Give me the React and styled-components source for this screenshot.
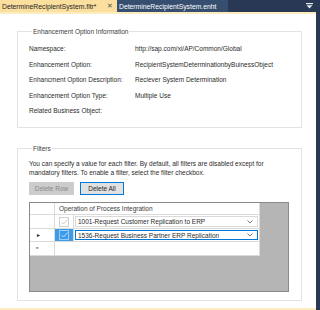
import React from "react";
import styled, { createGlobalStyle } from "styled-components";

const GlobalStyle = createGlobalStyle`
  html, body {
    margin: 0;
    padding: 0;
  }
  body {
    font-family: "Liberation Sans", Arial, sans-serif;
    color: #1e1e1e;
  }
`;

const Window = styled.div`
  width: 320px;
  height: 310px;
  background: #293955;
  display: flex;
  flex-direction: column;
  overflow: hidden;
`;

const TabBar = styled.div`
  height: 12px;
  display: flex;
  align-items: stretch;
  padding-right: 4px;
`;

const Tab = styled.div`
  display: flex;
  align-items: center;
  gap: 6px;
  padding: 0 4px 0 2px;
  font-size: 6.8px;
  white-space: nowrap;
  background: ${(p) => (p.$active ? "#fadf9e" : "#364e6f")};
  color: ${(p) => (p.$active ? "#1e1e1e" : "#ffffff")};
  width: ${(p) => p.$width}px;
  box-sizing: border-box;
`;

const Close = styled.span`
  font-size: 7px;
  color: #555;
  margin-left: auto;
`;

const Spacer = styled.div`
  flex: 1;
`;

const Overflow = styled.div`
  width: 10px;
  display: flex;
  align-items: center;
  justify-content: center;
  margin-right: 2px;
`;

const Main = styled.div`
  flex: 1;
  display: flex;
  padding-right: 4px;
`;

const Document = styled.div`
  flex: 1;
  background: #ffffff;
  border-top: 2px solid #fcecc0;
  border-bottom: 2px solid #fcecc0;
  padding: 14px 14px 0 17px;
  display: flex;
  flex-direction: column;
  gap: 17px;
`;

const Group = styled.fieldset`
  margin: 0;
  border: 1px solid #e3e3e3;
  padding: ${(p) => p.$pad};
  font-size: 6.5px;
  height: ${(p) => p.$height}px;
  box-sizing: border-box;
  legend {
    padding: 0 1px;
    margin-left: 3px;
    font-size: 6.5px;
    color: #3c3c3c;
  }
`;

const InfoGrid = styled.div`
  display: grid;
  grid-template-columns: 106px 1fr;
  grid-auto-rows: 15.5px;
  align-items: center;
  color: #2b2b2b;
`;

const Hint = styled.p`
  margin: 0;
  line-height: 9px;
  color: #2b2b2b;
`;

const Buttons = styled.div`
  display: flex;
  gap: 6px;
  margin: 5px 0 7px;
`;

const Button = styled.button`
  height: 13px;
  width: ${(p) => p.$width}px;
  padding: 0;
  font-family: inherit;
  font-size: 6.5px;
  background: ${(p) => (p.$disabled ? "#cccccc" : "#e1e1e1")};
  color: ${(p) => (p.$disabled ? "#8a8a8a" : "#1e1e1e")};
  border: 1px solid ${(p) => (p.$disabled ? "#cccccc" : "#0078d7")};
`;

const Grid = styled.div`
  width: 260px;
  height: 90px;
  box-sizing: border-box;
  background: #b5b5b5;
  border: 1px solid #8a8a8a;
  display: grid;
  grid-template-columns: 25px 19px 186px;
  grid-template-rows: 12px 14px 13px 14px;
  align-content: start;
`;

const Cell = styled.div`
  background: ${(p) => p.$bg || "#ffffff"};
  border-right: 1px solid #dadada;
  border-bottom: 1px solid #dadada;
  box-sizing: border-box;
  display: flex;
  align-items: center;
  justify-content: ${(p) => (p.$center ? "center" : "flex-start")};
  grid-column: ${(p) => p.$span || "auto"};
  font-size: 6.5px;
  color: #2b2b2b;
`;

const Header = styled(Cell)`
  color: #3c3c3c;
  padding-left: 4px;
`;

const Check = styled.div`
  width: 8px;
  height: 8px;
  border: 1px solid ${(p) => (p.$selected ? "#9fcaf2" : "#cfcfcf")};
  display: flex;
  align-items: center;
  justify-content: center;
`;

const Combo = styled.div`
  flex: 1;
  align-self: stretch;
  margin: 1px;
  display: flex;
  align-items: center;
  padding: 0 4px 0 2px;
  border: 1px solid ${(p) => (p.$focus ? "#0078d7" : "#dadada")};
  span {
    flex: 1;
  }
`;

const Marker = styled.span`
  font-size: ${(p) => p.$size}px;
  color: #1e1e1e;
  margin-left: 6px;
`;

const CheckMark = ({ color }) => (
  <svg width="7" height="6" viewBox="0 0 7 6">
    <polyline points="0.5,3 2.5,5 6.5,0.5" fill="none" stroke={color} strokeWidth="0.9" />
  </svg>
);

const Chevron = () => (
  <svg width="6" height="4" viewBox="0 0 6 4">
    <polyline points="0.5,0.5 3,3 5.5,0.5" fill="none" stroke="#555" strokeWidth="0.8" />
  </svg>
);

const info = [
  ["Namespace:", "http://sap.com/xi/AP/Common/Global"],
  ["Enhancement Option:", "RecipientSystemDeterminationbyBuinessObject"],
  ["Enhancment Option Description:", "Reciever System Determination"],
  ["Enhancement Option Type:", "Multiple Use"],
  ["Related Business Object:", ""],
];

const rows = [
  { text: "1001-Request Customer Replication to ERP", current: false },
  { text: "1536-Request Business Partner ERP Replication", current: true },
];

const App = () => (
  <Window>
    <GlobalStyle />
    <TabBar>
      <Tab $active $width={117}>
        DetermineRecipientSystem.fltr*
        <Close>✕</Close>
      </Tab>
      <Tab $width={111}>DetermineRecipientSystem.enht</Tab>
      <Spacer />
      <Overflow>
        <svg width="7" height="6" viewBox="0 0 7 6">
          <rect x="0" y="0" width="7" height="1.2" fill="#e6e9ef" />
          <polygon points="0.5,2.2 6.5,2.2 3.5,5.5" fill="#e6e9ef" />
        </svg>
      </Overflow>
    </TabBar>
    <Main>
      <Document>
        <Group $pad="6px 10px 0 11px" $height={100}>
          <legend>Enhancement Option Information</legend>
          <InfoGrid>
            {info.map(([label, value]) => (
              <React.Fragment key={label}>
                <span>{label}</span>
                <span>{value}</span>
              </React.Fragment>
            ))}
          </InfoGrid>
        </Group>
        <Group $pad="7px 10px 0 11px" $height={156}>
          <legend>Filters</legend>
          <Hint>
            You can specify a value for each filter. By default, all filters are disabled except for
            <br />
            mandatory filters. To enable a filter, select the filter checkbox.
          </Hint>
          <Buttons>
            <Button $disabled $width={45}>Delete Row</Button>
            <Button $width={44}>Delete All</Button>
          </Buttons>
          <Grid>
            <Cell />
            <Header $span="span 2">Operation of Process Integration</Header>
            {rows.map((r) => (
              <React.Fragment key={r.text}>
                <Cell>{r.current && <Marker $size={5}>►</Marker>}</Cell>
                <Cell $center $bg={r.current ? "#3d9bea" : "#ffffff"}>
                  <Check $selected={r.current}>
                    <CheckMark color={r.current ? "#cfe4f8" : "#c4c4c4"} />
                  </Check>
                </Cell>
                <Cell>
                  <Combo $focus={r.current}>
                    <span>{r.text}</span>
                    <Chevron />
                  </Combo>
                </Cell>
              </React.Fragment>
            ))}
            <Cell>
              <Marker $size={6}>*</Marker>
            </Cell>
            <Cell $span="span 2" />
          </Grid>
        </Group>
      </Document>
    </Main>
  </Window>
);

export default App;
